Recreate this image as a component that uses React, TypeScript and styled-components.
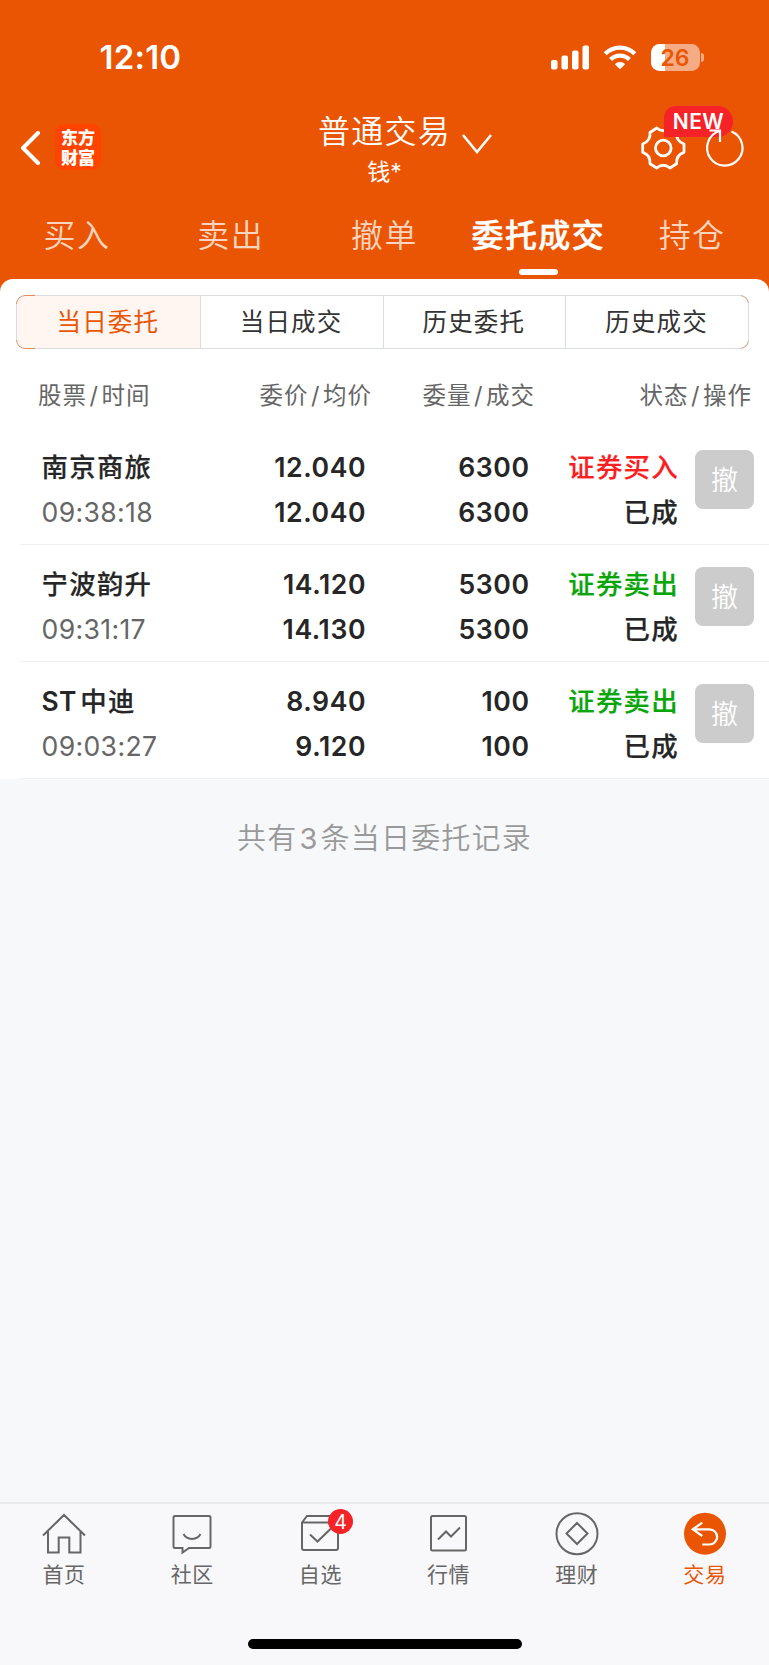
import React from 'react';
import styled, { createGlobalStyle } from 'styled-components';

const ORANGE = '#ea5504';

const GlobalStyle = createGlobalStyle`
  * { box-sizing: border-box; }
  body {
    margin: 0;
    background: #f7f8fa;
    font-family: Inter, "Noto Sans CJK SC", sans-serif;
    color: #262626;
  }
`;

const Screen = styled.div`
  width: 769px;
  height: 1665px;
  display: flex;
  flex-direction: column;
  background: #f7f8fa;
  overflow: hidden;
`;

const Header = styled.header`
  background: ${ORANGE};
  color: #fff;
  height: 297px;
  flex: none;
`;

const StatusBar = styled.div`
  height: 103px;
  padding: 12px 65px 0 99.5px;
  display: flex;
  align-items: center;
  justify-content: space-between;
`;

const Clock = styled.div`
  font-size: 33px;
  font-weight: 600;
  letter-spacing: 0.2px;
  line-height: 39px;
`;

const StatusIcons = styled.div`
  display: flex;
  align-items: center;
  height: 28px;
`;

const SignalIcon = styled.svg`
  margin-right: 14.5px;
`;

const WifiIcon = styled.svg`
  margin-right: 13.5px;
`;

const Battery = styled.div`
  width: 49px;
  height: 27px;
  border-radius: 8.5px;
  background: linear-gradient(to right, #fff 13.5px, #f5ab83 13.5px);
  color: ${ORANGE};
  font-size: 23px;
  font-weight: 600;
  line-height: 28px;
  text-align: center;
`;

const BatteryTip = styled.div`
  width: 3px;
  height: 9px;
  margin-left: 1.5px;
  border-radius: 0 4px 4px 0;
  background: #f5ab83;
`;

const NavBar = styled.div`
  height: 87px;
  display: grid;
  grid-template-columns: 1fr auto 1fr;
`;

const NavLeft = styled.div`
  display: flex;
  align-items: flex-start;
  padding: 21px 0 0 20px;
`;

const Logo = styled.div`
  width: 46px;
  height: 46px;
  margin-left: 14px;
  padding-top: 3px;
  border-radius: 9px;
  background: #ff4400;
  font-family: "Noto Sans CJK SC", sans-serif;
  font-size: 17px;
  font-weight: 900;
  text-align: center;
`;

const LogoLine = styled.div`
  height: 19.5px;
  line-height: 19.5px;
`;

const BackIcon = styled.svg`
  margin-top: 7px;
`;

const TitleBlock = styled.div`
  text-align: center;
  position: relative;
`;

const Title = styled.div`
  margin-top: 7px;
  font-size: 32px;
  font-weight: 350;
  letter-spacing: 1.2px;
  line-height: 44px;
`;

const Account = styled.div`
  margin-top: 2px;
  font-size: 23px;
  line-height: 32px;
`;

const TitleArrow = styled.svg`
  position: absolute;
  left: 142.5px;
  top: 29.5px;
`;

const NavRight = styled.div`
  display: flex;
  justify-content: flex-end;
  padding-right: 17px;
`;

const Actions = styled.div`
  position: relative;
  width: 112px;
  height: 72px;
`;

const NewBadge = styled.div`
  position: absolute;
  left: 24px;
  top: 3px;
  width: 69px;
  height: 31px;
  border-radius: 12px 16px 16px 0;
  background: #f52228;
  font-size: 21px;
  font-weight: 600;
  letter-spacing: 0.4px;
  line-height: 31px;
  text-align: center;
`;

const ActionIcons = styled.svg`
  position: absolute;
  left: 0;
  top: 0;
`;

const Tabs = styled.nav`
  height: 89px;
  display: grid;
  grid-template-columns: repeat(5, 1fr);
`;

const Tab = styled.div<{ $active?: boolean }>`
  display: flex;
  flex-direction: column;
  align-items: center;
  padding-top: 22px;
  font-size: 32px;
  letter-spacing: 1.4px;
  line-height: 48px;
  white-space: nowrap;
  font-weight: ${(p) => (p.$active ? 500 : 350)};
  -webkit-text-stroke: ${(p) => (p.$active ? '0.5px #fff' : '0')};
  color: ${(p) => (p.$active ? '#fff' : '#fbd5c0')};
`;

const TabMark = styled.div`
  width: 39px;
  height: 6px;
  margin-top: 9px;
  border-radius: 3px;
  background: #fff;
`;

const Sheet = styled.main`
  margin-top: -18px;
  padding-top: 16px;
  border-radius: 13px 13px 0 0;
  background: #fff;
  flex: none;
`;

const Segments = styled.div`
  position: relative;
  height: 54px;
  margin: 0 20px 0 16px;
  display: grid;
  grid-template-columns: repeat(4, 1fr);
  border: 1px solid #d9dde2;
  border-radius: 9px;

  /* orange rim that only shows at the rounded corners */
  &::after {
    content: '';
    position: absolute;
    inset: -1px;
    border: 1px solid #e68a5c;
    border-radius: 9px;
    mask:
      linear-gradient(#000, #000) left top / 19px 9px no-repeat,
      linear-gradient(#000, #000) left bottom / 19px 9px no-repeat,
      linear-gradient(#000, #000) right top / 8px 8px no-repeat,
      linear-gradient(#000, #000) right bottom / 8px 8px no-repeat;
  }
`;

const Segment = styled.div<{ $active?: boolean }>`
  border-left: 1px solid #d9dde2;
  padding-right: 1px;
  font-size: 24.5px;
  letter-spacing: 1.2px;
  line-height: 53px;
  height: 52px;
  text-align: center;
  color: ${(p) => (p.$active ? ORANGE : '#333')};
  background: ${(p) => (p.$active ? '#fff5f1' : '#fff')};
  &:first-child { border-left: 0; border-radius: 8px 0 0 8px; }
  &:last-child { border-radius: 0 8px 8px 0; }
`;

const ColumnHeads = styled.div`
  height: 79px;
  padding: 10px 17px 0 38px;
  display: grid;
  grid-template-columns: 130px 204px 163px 1fr;
  align-items: center;
  font-size: 23.5px;
  letter-spacing: 1px;
  white-space: nowrap;
  color: #666;
`;

const Slash = styled.span`
  margin: 0 2.5px;
`;

const Cell = styled.div`
  text-align: right;
  &:first-child { text-align: left; }
`;

const Order = styled.section`
  height: 117px;
  margin-left: 20px;
  padding: 17px 14px 0 21.5px;
  display: grid;
  grid-template-columns: 140px 184px 163.5px 149px 76px;
  border-bottom: 1px solid #eff0f2;
  font-size: 26.6px;
  line-height: 45px;
  white-space: nowrap;
`;

const Figure = styled.div`
  font-weight: 600;
  letter-spacing: 0.6px;
  margin-right: -0.6px;
`;

const StockName = styled.div`
  font-size: 26.4px;
  font-weight: 500;
  letter-spacing: 1.3px;
  -webkit-text-stroke: 0.2px currentColor;
`;

const Prefix = styled.span`
  font-weight: 600;
  letter-spacing: 0.3px;
  margin-right: 3.5px;
  -webkit-text-stroke: 0;
`;

const Time = styled.div`
  font-weight: 400;
  color: #666;
  letter-spacing: 0.35px;
`;

const Side = styled(StockName)<{ $buy?: boolean }>`
  margin-right: -1px;
  color: ${(p) => (p.$buy ? '#f82020' : '#09a509')};
`;

const State = styled(StockName)`
  margin-right: -1px;
`;

const CancelButton = styled.button`
  width: 59px;
  height: 59px;
  margin: 5px 0 0 17px;
  padding: 0;
  border: 0;
  border-radius: 8px;
  background: #ccc;
  color: #fff;
  font: 350 27px/61px Inter, "Noto Sans CJK SC", sans-serif;
`;

const Summary = styled.div`
  margin-top: 39px;
  font-size: 29px;
  font-weight: 350;
  letter-spacing: 1.2px;
  line-height: 42px;
  text-align: center;
  color: #999;
`;

const Total = styled.span`
  margin: 0 2px;
  font-weight: 400;
`;

const Spacer = styled.div`
  flex: 1;
`;

const BottomBar = styled.footer`
  height: 163px;
  flex: none;
  border-top: 2px solid #e8eaec;
  background: #f8f8fb;
  display: flex;
  flex-direction: column;
  align-items: center;
`;

const BottomTabs = styled.div`
  width: 100%;
  height: 135px;
  display: grid;
  grid-template-columns: repeat(6, 1fr);
`;

const BottomTab = styled.div<{ $active?: boolean }>`
  display: flex;
  flex-direction: column;
  align-items: center;
  position: relative;
  padding-top: 8px;
  font-size: 21px;
  letter-spacing: 0.6px;
  line-height: 30px;
  color: ${(p) => (p.$active ? ORANGE : '#666')};
  svg { margin-bottom: 2px; }
`;

const Count = styled.span`
  position: absolute;
  left: 71.5px;
  top: 4.5px;
  width: 25.5px;
  height: 25.5px;
  border-radius: 50%;
  background: #f52228;
  color: #fff;
  font-size: 19.5px;
  letter-spacing: 0;
  line-height: 26px;
  text-align: center;
`;

const HomeIndicator = styled.div`
  width: 274px;
  height: 10px;
  border-radius: 5px;
  background: #000;
`;

const columns = [
  ['股票', '时间'],
  ['委价', '均价'],
  ['委量', '成交'],
  ['状态', '操作'],
];

const orders = [
  { prefix: '', name: '南京商旅', time: '09:38:18', price: '12.040', avg: '12.040', qty: '6300', done: '6300', side: '证券买入', buy: true },
  { prefix: '', name: '宁波韵升', time: '09:31:17', price: '14.120', avg: '14.130', qty: '5300', done: '5300', side: '证券卖出', buy: false },
  { prefix: 'ST', name: '中迪', time: '09:03:27', price: '8.940', avg: '9.120', qty: '100', done: '100', side: '证券卖出', buy: false },
];

const bottomTabs = [
  {
    label: '首页',
    icon: <path d="M2 23.5 23 3 44 23.5M7 19.5V40.5H17.7V25.5H28.3V40.5H39.5V19.5" />,
  },
  {
    label: '社区',
    icon: (
      <>
        <path d="M6 4H40a1.5 1.5 0 0 1 1.5 1.5V34.5A1.5 1.5 0 0 1 40 36H20L13.5 40.5V36H6A1.5 1.5 0 0 1 4.5 34.5V5.5A1.5 1.5 0 0 1 6 4Z" />
        <path d="M14.5 22C18 28.5 28 28.5 31.5 22" />
      </>
    ),
  },
  {
    label: '自选',
    icon: (
      <>
        <path d="M5 10.5 10 4H36L41 10.5V36A2 2 0 0 1 39 38H7A2 2 0 0 1 5 36ZM5 10.5H41" />
        <path d="M13 22.5 20.5 29.5 35 15.5" />
      </>
    ),
  },
  {
    label: '行情',
    icon: (
      <>
        <rect x="5" y="4" width="35" height="34.5" rx="1.5" />
        <path d="M12 27.5 20 19.5 25 24.5 34 15.5" />
      </>
    ),
  },
  {
    label: '理财',
    icon: (
      <>
        <circle cx="23" cy="21.7" r="20.5" />
        <path d="M23 11 33.5 21.5 23 32 12.5 21.5Z" />
      </>
    ),
  },
  {
    label: '交易',
    icon: (
      <>
        <circle cx="23" cy="21.7" r="21" fill={ORANGE} stroke="none" />
        <path d="M20.3 10.7 10.8 17.3 20.3 24M10.8 17.3H27.5A7.6 7.6 0 0 1 27.5 32.5H20.3" stroke="#fff" strokeWidth="2.2" />
      </>
    ),
  },
];

export default function App() {
  return (
    <Screen>
      <GlobalStyle />
      <Header>
        <StatusBar>
          <Clock>12:10</Clock>
          <StatusIcons>
            <SignalIcon width="38" height="25" viewBox="0 0 38 25" fill="#fff">
              <rect x="0" y="15" width="6.5" height="9.5" rx="2" />
              <rect x="10.5" y="10.5" width="6.5" height="14" rx="2" />
              <rect x="21" y="5.5" width="6.5" height="19" rx="2" />
              <rect x="31.5" y="0.5" width="6.5" height="24" rx="2" />
            </SignalIcon>
            <WifiIcon width="34" height="25" viewBox="0 0 34 25" fill="none" stroke="#fff" strokeWidth="4.3">
              <path d="M2.2 8.8C10.5 0.6 23.5 0.6 31.8 8.8" />
              <path d="M7.6 14.5C13 9.3 21 9.3 26.4 14.5" />
              <path d="M11.9 19.2C14.5 16.4 19.5 16.4 22.1 19.2L17 24.3Z" fill="#fff" stroke="none" />
            </WifiIcon>
            <Battery>26</Battery>
            <BatteryTip />
          </StatusIcons>
        </StatusBar>

        <NavBar>
          <NavLeft>
            <BackIcon width="21" height="34" viewBox="0 0 21 34" fill="none" stroke="#fff" strokeWidth="4" strokeLinecap="round" strokeLinejoin="round">
              <path d="M18 2 3 17 18 32" />
            </BackIcon>
            <Logo>
              <LogoLine>东方</LogoLine>
              <LogoLine>财富</LogoLine>
            </Logo>
          </NavLeft>
          <TitleBlock>
            <Title>普通交易</Title>
            <Account>钱*</Account>
            <TitleArrow width="32" height="22" viewBox="0 0 32 22" fill="none" stroke="#fff" strokeWidth="2.6">
              <path d="M2 2 16 19 30 2" />
            </TitleArrow>
          </TitleBlock>
          <NavRight>
            <Actions>
              <ActionIcons width="112" height="72" viewBox="0 0 112 72" fill="none" stroke="#fff" strokeWidth="2.8" strokeLinejoin="round">
                <circle cx="23.3" cy="45" r="7.8" />
                <path d="M16.7 25Q23.3 30.5 29.9 25L36.6 29.5Q35.8 38 44 41V49.3Q35.8 52 36.6 60.7L29.9 65Q23.3 59.5 16.7 65L10 60.7Q10.8 52 2.7 49.3V41Q10.8 38 10 29.5Z" />
              </ActionIcons>
              <NewBadge>NEW</NewBadge>
              <ActionIcons width="112" height="72" viewBox="0 0 112 72" fill="none" stroke="#fff" strokeWidth="2.2">
                <path d="M91.5 28.5A17.7 17.7 0 1 1 79.5 28M69.5 27.5H80V39" />
              </ActionIcons>
            </Actions>
          </NavRight>
        </NavBar>

        <Tabs>
          <Tab>买入</Tab>
          <Tab>卖出</Tab>
          <Tab>撤单</Tab>
          <Tab $active>委托成交<TabMark /></Tab>
          <Tab>持仓</Tab>
        </Tabs>
      </Header>

      <Sheet>
        <Segments>
          <Segment $active>当日委托</Segment>
          <Segment>当日成交</Segment>
          <Segment>历史委托</Segment>
          <Segment>历史成交</Segment>
        </Segments>
        <ColumnHeads>
          {columns.map(([upper, lower]) => (
            <Cell key={upper}>{upper}<Slash>/</Slash>{lower}</Cell>
          ))}
        </ColumnHeads>
        {orders.map((o) => (
          <Order key={o.time}>
            <Cell>
              <StockName>{o.prefix && <Prefix>{o.prefix}</Prefix>}{o.name}</StockName>
              <Time>{o.time}</Time>
            </Cell>
            <Cell>
              <Figure>{o.price}</Figure>
              <Figure>{o.avg}</Figure>
            </Cell>
            <Cell>
              <Figure>{o.qty}</Figure>
              <Figure>{o.done}</Figure>
            </Cell>
            <Cell>
              <Side $buy={o.buy}>{o.side}</Side>
              <State>已成</State>
            </Cell>
            <CancelButton>撤</CancelButton>
          </Order>
        ))}
      </Sheet>

      <Summary>共有<Total>3</Total>条当日委托记录</Summary>
      <Spacer />

      <BottomBar>
        <BottomTabs>
          {bottomTabs.map((t) => (
            <BottomTab key={t.label} $active={t.label === '交易'}>
              <svg width="46" height="46" viewBox="0 0 46 46" fill="none" stroke="#666" strokeWidth="2">
                {t.icon}
              </svg>
              {t.label}
              {t.label === '自选' && <Count>4</Count>}
            </BottomTab>
          ))}
        </BottomTabs>
        <HomeIndicator />
      </BottomBar>
    </Screen>
  );
}
